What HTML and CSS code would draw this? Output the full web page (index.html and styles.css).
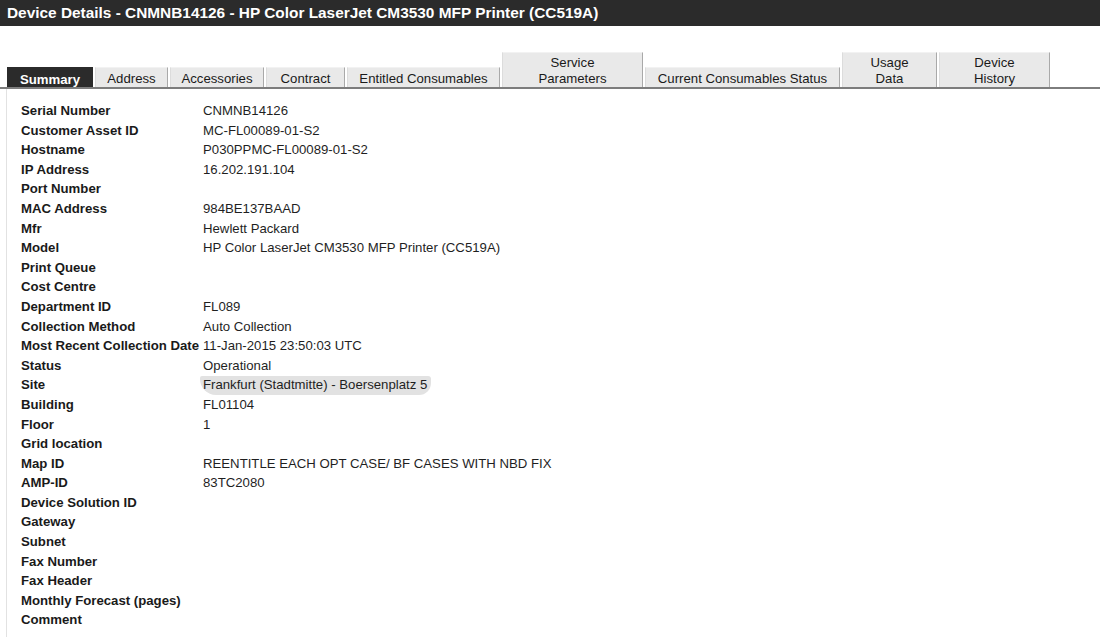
FILE: index.html
```html
<!DOCTYPE html>
<html>
<head>
<meta charset="utf-8">
<link rel="stylesheet" href="styles.css">
</head>
<body>
<div class="titlebar">Device Details - CNMNB14126 - HP Color LaserJet CM3530 MFP Printer (CC519A)</div>
<div class="tabs">
  <div class="tab active w-summary">Summary</div>
  <div class="tab w-address">Address</div>
  <div class="tab w-acc">Accessories</div>
  <div class="tab w-contract">Contract</div>
  <div class="tab w-entitled">Entitled Consumables</div>
  <div class="tab tall w-service">Service<br>Parameters</div>
  <div class="tab w-current">Current Consumables Status</div>
  <div class="tab tall w-usage">Usage<br>Data</div>
  <div class="tab tall w-history">Device<br>History</div>
</div>
<div class="panel">
  <div class="details">
    <div class="label">Serial Number</div><div class="value">CNMNB14126</div>
    <div class="label">Customer Asset ID</div><div class="value">MC-FL00089-01-S2</div>
    <div class="label">Hostname</div><div class="value">P030PPMC-FL00089-01-S2</div>
    <div class="label">IP Address</div><div class="value">16.202.191.104</div>
    <div class="label">Port Number</div><div class="value"></div>
    <div class="label">MAC Address</div><div class="value">984BE137BAAD</div>
    <div class="label">Mfr</div><div class="value">Hewlett Packard</div>
    <div class="label">Model</div><div class="value">HP Color LaserJet CM3530 MFP Printer (CC519A)</div>
    <div class="label">Print Queue</div><div class="value"></div>
    <div class="label">Cost Centre</div><div class="value"></div>
    <div class="label">Department ID</div><div class="value">FL089</div>
    <div class="label">Collection Method</div><div class="value">Auto Collection</div>
    <div class="label">Most Recent Collection Date</div><div class="value">11-Jan-2015 23:50:03 UTC</div>
    <div class="label">Status</div><div class="value">Operational</div>
    <div class="label">Site</div><div class="value"><span class="smudge">Frankfurt (Stadtmitte) - Boersenplatz 5</span></div>
    <div class="label">Building</div><div class="value">FL01104</div>
    <div class="label">Floor</div><div class="value">1</div>
    <div class="label">Grid location</div><div class="value"></div>
    <div class="label">Map ID</div><div class="value">REENTITLE EACH OPT CASE/ BF CASES WITH NBD FIX</div>
    <div class="label">AMP-ID</div><div class="value">83TC2080</div>
    <div class="label">Device Solution ID</div><div class="value"></div>
    <div class="label">Gateway</div><div class="value"></div>
    <div class="label">Subnet</div><div class="value"></div>
    <div class="label">Fax Number</div><div class="value"></div>
    <div class="label">Fax Header</div><div class="value"></div>
    <div class="label">Monthly Forecast (pages)</div><div class="value"></div>
    <div class="label">Comment</div><div class="value"></div>
  </div>
</div>
</body>
</html>
```

FILE: styles.css
```css
html, body {
  margin: 0;
  padding: 0;
  background: #ffffff;
  font-family: "Liberation Sans", Arial, sans-serif;
  color: #1a1a1a;
  overflow: hidden;
}

.titlebar {
  height: 26px;
  line-height: 25px;
  background: #2b2b2b;
  color: #ffffff;
  font-weight: bold;
  font-size: 15.4px;
  padding-left: 7px;
  white-space: nowrap;
}

.tabs {
  display: flex;
  align-items: flex-end;
  margin-top: 26px;
  padding-left: 7px;
  border-bottom: 2px solid #7d7d7d;
  height: 35px;
}

.tab {
  box-sizing: border-box;
  height: 20px;
  margin-right: 2px;
  background: #e9e9e9;
  border-left: 1px solid #dcdcdc;
  border-right: 1px solid #a9a9a9;
  border-top: 1px solid #f2f2f2;
  font-size: 13.2px;
  line-height: 18px;
  padding-top: 2px;
  text-align: center;
  color: #1a1a1a;
  white-space: nowrap;
}

.tab.tall {
  height: 35px;
  line-height: 16px;
  padding-top: 2px;
}

.tab.active {
  background: #2b2b2b;
  border-color: #2b2b2b;
  color: #ffffff;
  font-weight: bold;
  line-height: 19px;
  padding-top: 2px;
}

.w-summary { width: 86px; }
.w-address { width: 73px; }
.w-acc { width: 94px; }
.w-contract { width: 79px; }
.w-entitled { width: 153px; }
.w-service { width: 141px; }
.w-current { width: 195px; }
.w-usage { width: 95px; }
.w-history { width: 111px; }

.panel {
  margin-left: 6px;
  border-left: 1px solid #e2e2e2;
  height: 560px;
}

.details {
  display: grid;
  grid-template-columns: 182px 1fr;
  padding-top: 12px;
  padding-left: 14px;
  font-size: 13.2px;
  line-height: 19.6px;
}

.label {
  font-weight: bold;
  color: #1a1a1a;
  white-space: nowrap;
}

.value {
  color: #1f1f1f;
  white-space: nowrap;
}

.smudge {
  background: #e2e2e2;
  margin-left: -3px;
  padding: 1px 4px 3px 3px;
  border-radius: 2px 3px 12px 16px;
}
```
